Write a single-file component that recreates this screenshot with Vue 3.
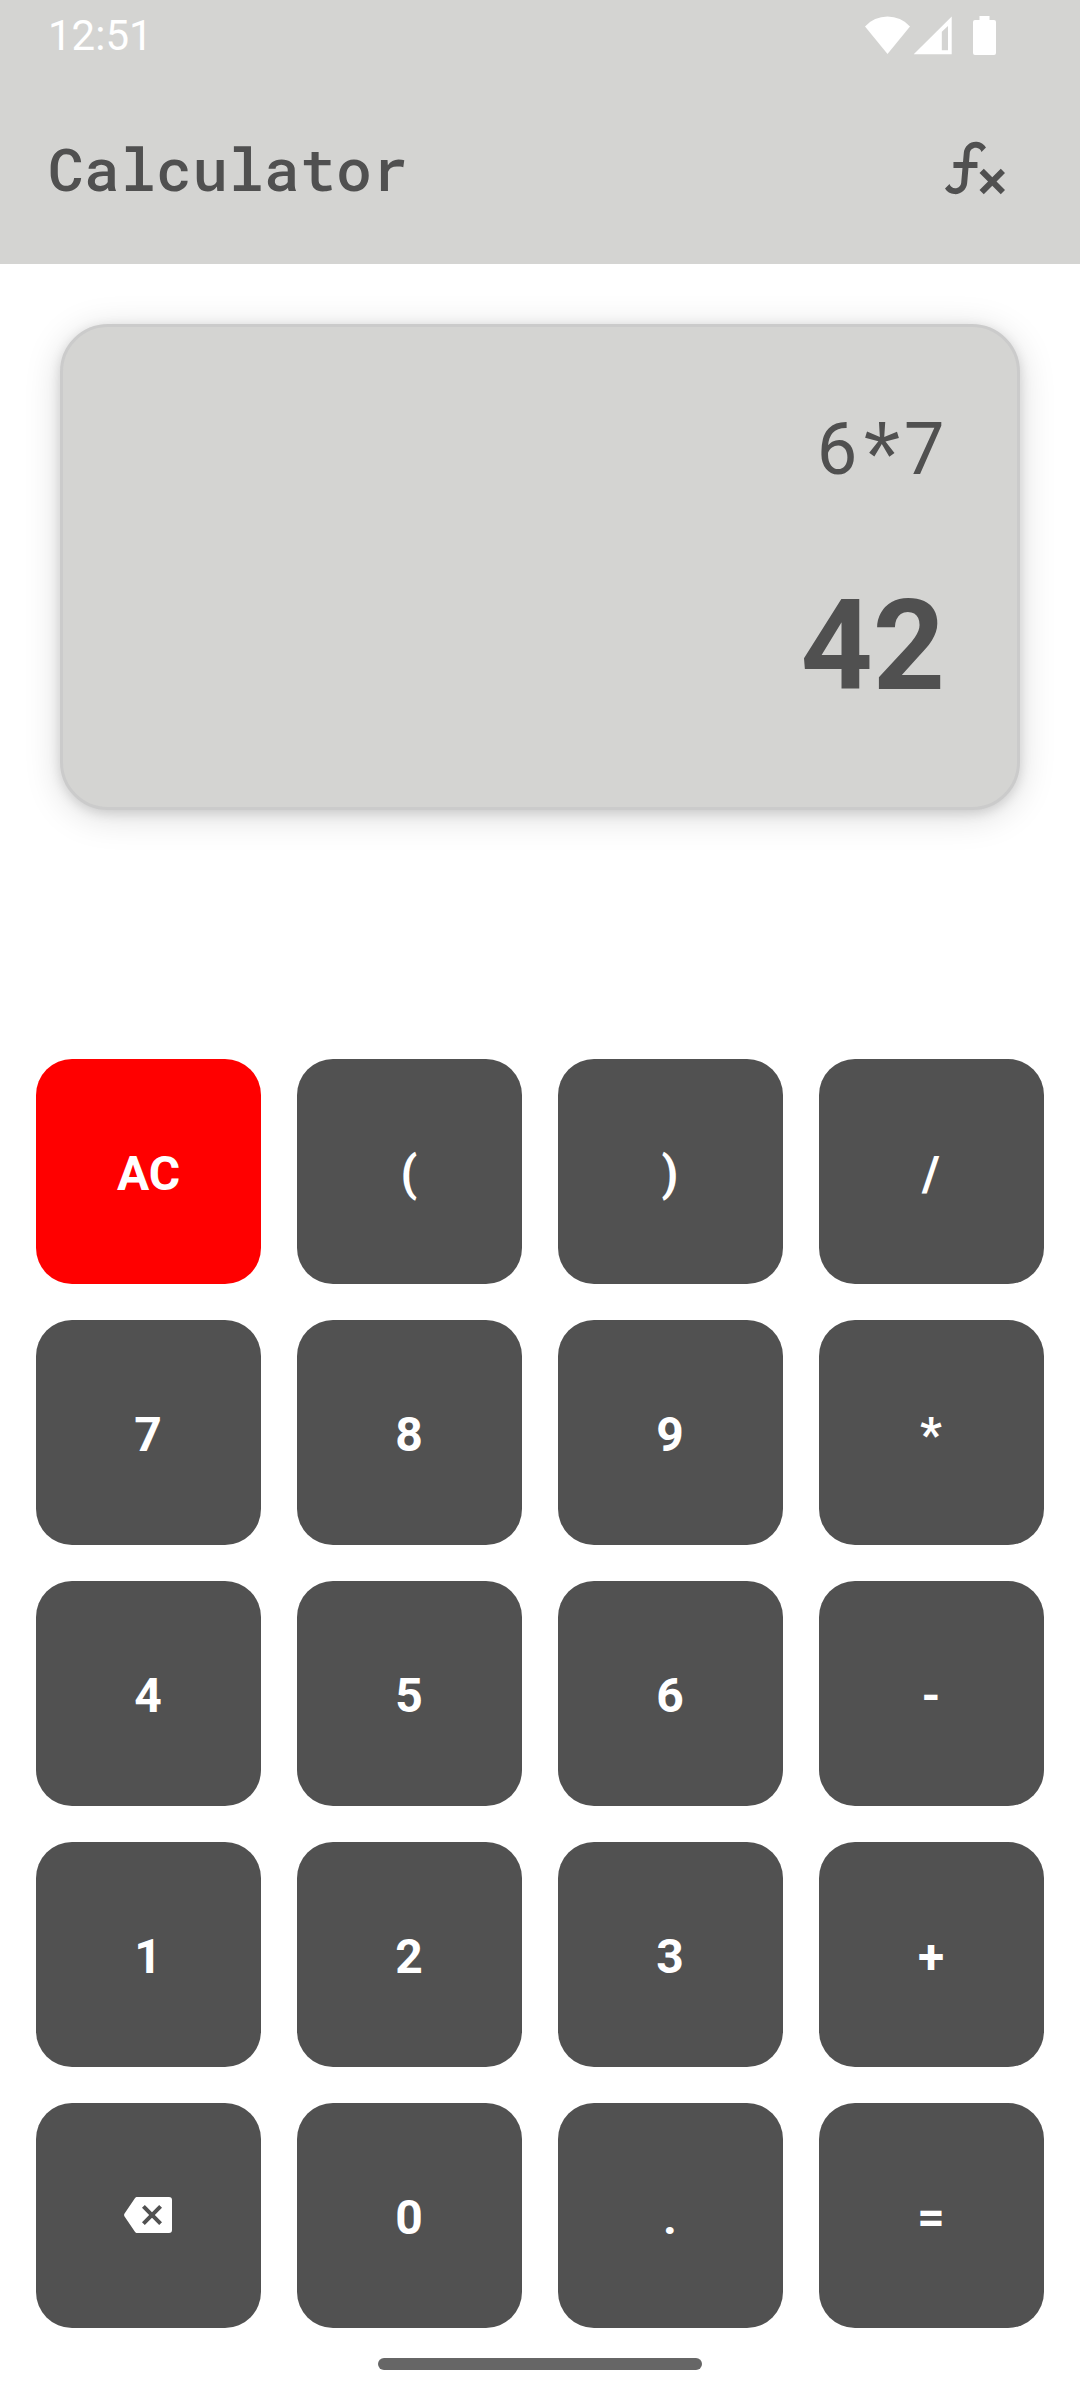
<script setup>
const keys = [
  'AC', '(', ')', '/',
  '7', '8', '9', '*',
  '4', '5', '6', '-',
  '1', '2', '3', '+',
  'back', '0', '.', '=',
]
const expression = '6*7'
const result = '42'
</script>

<template>
  <div class="screen">
    <header class="header">
      <div class="status">
        <span class="clock">12:51</span>
        <svg class="status-icons" viewBox="865 16 131 40" width="131" height="40" fill="#fff">
          <path d="M865 26.5A30.3 30.3 0 0 1 910 26.5L887.5 54Z" />
          <path fill-rule="evenodd" d="M913.7 54.3H951.7V16.5ZM941.8 50.3V31.7L948 26V50.3Z" />
          <path d="M979.5 16H989.5V20H994A2 2 0 0 1 996 22V53A2 2 0 0 1 994 55H975A2 2 0 0 1 973 53V22A2 2 0 0 1 975 20H979.5Z" />
        </svg>
      </div>
      <div class="toolbar">
        <h1 class="title">Calculator</h1>
        <svg class="fx" viewBox="0 0 24 24" width="72" height="72" fill="#505050">
          <path d="M12.42,5.29C11.32,5.19 10.35,6 10.25,7.11L10,10H12.82V12H9.82L9.38,17.07C9.18,19.27 7.24,20.9 5.04,20.7C3.79,20.59 2.66,19.9 2,18.83L3.5,17.33C3.83,18.38 4.96,18.97 6,18.63C6.78,18.39 7.33,17.7 7.4,16.89L7.82,12H4.82V10H8L8.27,6.93C8.46,4.73 10.39,3.1 12.6,3.28C13.86,3.39 15,4.09 15.66,5.17L14.16,6.67C13.91,5.9 13.23,5.36 12.42,5.29M22,13.65L20.59,12.24L17.76,15.07L14.93,12.24L13.5,13.65L16.35,16.5L13.5,19.31L14.93,20.72L17.76,17.89L20.59,20.72L22,19.31L19.17,16.5L22,13.65Z" />
        </svg>
      </div>
    </header>

    <section class="display">
      <div class="expression">{{ expression }}</div>
      <div class="result">{{ result }}</div>
    </section>

    <main class="keypad">
      <button v-for="k in keys" :key="k" class="key" :class="{ clear: k === 'AC' }">
        <svg v-if="k === 'back'" class="back" viewBox="0 0 24 24" width="48" height="48" fill="#fff">
          <path d="M22.5,3H6.6C6.1,3 5.75,3.2 5.45,3.65L0.2,11.4Q-0.1,12 0.2,12.6L5.45,20.35C5.75,20.8 6.1,21 6.6,21H22.5A1.5,1.5 0 0 0 24,19.5V4.5A1.5,1.5 0 0 0 22.5,3M19,15.59L17.59,17L14,13.41L10.41,17L9,15.59L12.59,12L9,8.41L10.41,7L14,10.59L17.59,7L19,8.41L15.41,12Z" />
        </svg>
        <span v-else class="label">{{ k }}</span>
      </button>
    </main>

    <div class="nav-pill"></div>
  </div>
</template>

<style>
body {
  margin: 0;
  background: #fff;
}
</style>

<style scoped>
.screen {
  box-sizing: border-box;
  width: 1080px;
  height: 2400px;
  display: flex;
  flex-direction: column;
  background: #fff;
  color: #505050;
  font-family: Roboto, sans-serif;
}
.header {
  height: 264px;
  background: #d4d4d2;
}
.status {
  height: 72px;
  display: flex;
  justify-content: space-between;
  align-items: flex-start;
  padding: 0 84px 0 48px;
}
.clock {
  font-size: 42px;
  line-height: 50px;
  margin-top: 11px;
  color: #fff;
}
.status-icons {
  margin-top: 16px;
}
.toolbar {
  height: 192px;
  display: flex;
  justify-content: space-between;
  align-items: flex-start;
  padding: 0 69px 0 48px;
}
.title {
  margin: 61px 0 0;
  font-family: "Roboto Mono", "DejaVu Sans Mono", monospace;
  font-size: 60px;
  line-height: 70px;
  font-weight: 500;
}
.fx {
  margin-top: 60px;
}
.display {
  box-sizing: border-box;
  height: 486px;
  margin: 60px 60px 0;
  padding: 72px 72px 0 0;
  border: 3px solid #cbcbcb;
  border-radius: 48px;
  background: #d4d4d2;
  box-shadow: 0 3px 12px rgba(0, 0, 0, 0.13), 0 6px 36px rgba(0, 0, 0, 0.15);
  text-align: right;
}
.expression {
  margin-right: -1px;
  font-family: "Roboto Mono", "DejaVu Sans Mono", monospace;
  font-size: 72px;
  line-height: 96px;
}
.result {
  margin-top: 77px;
  font-size: 126px;
  line-height: 148px;
  font-weight: 700;
}
.keypad {
  display: grid;
  grid-template-columns: repeat(4, 225px);
  grid-auto-rows: 225px;
  gap: 36px;
  margin: 249px 36px 0;
}
.key {
  display: flex;
  align-items: center;
  justify-content: center;
  padding: 0 1px 0 0;
  border: 0;
  border-radius: 36px;
  background: #515151;
  color: #fff;
  font: 700 48px/56px Roboto, sans-serif;
}
.key.clear {
  padding-right: 0;
  background: #f00;
}
.label {
  padding-top: 5px;
}
.back {
  margin-bottom: 1px;
}
.nav-pill {
  width: 324px;
  height: 12px;
  margin: 30px auto 0;
  border-radius: 6px;
  background: #666;
}
</style>
